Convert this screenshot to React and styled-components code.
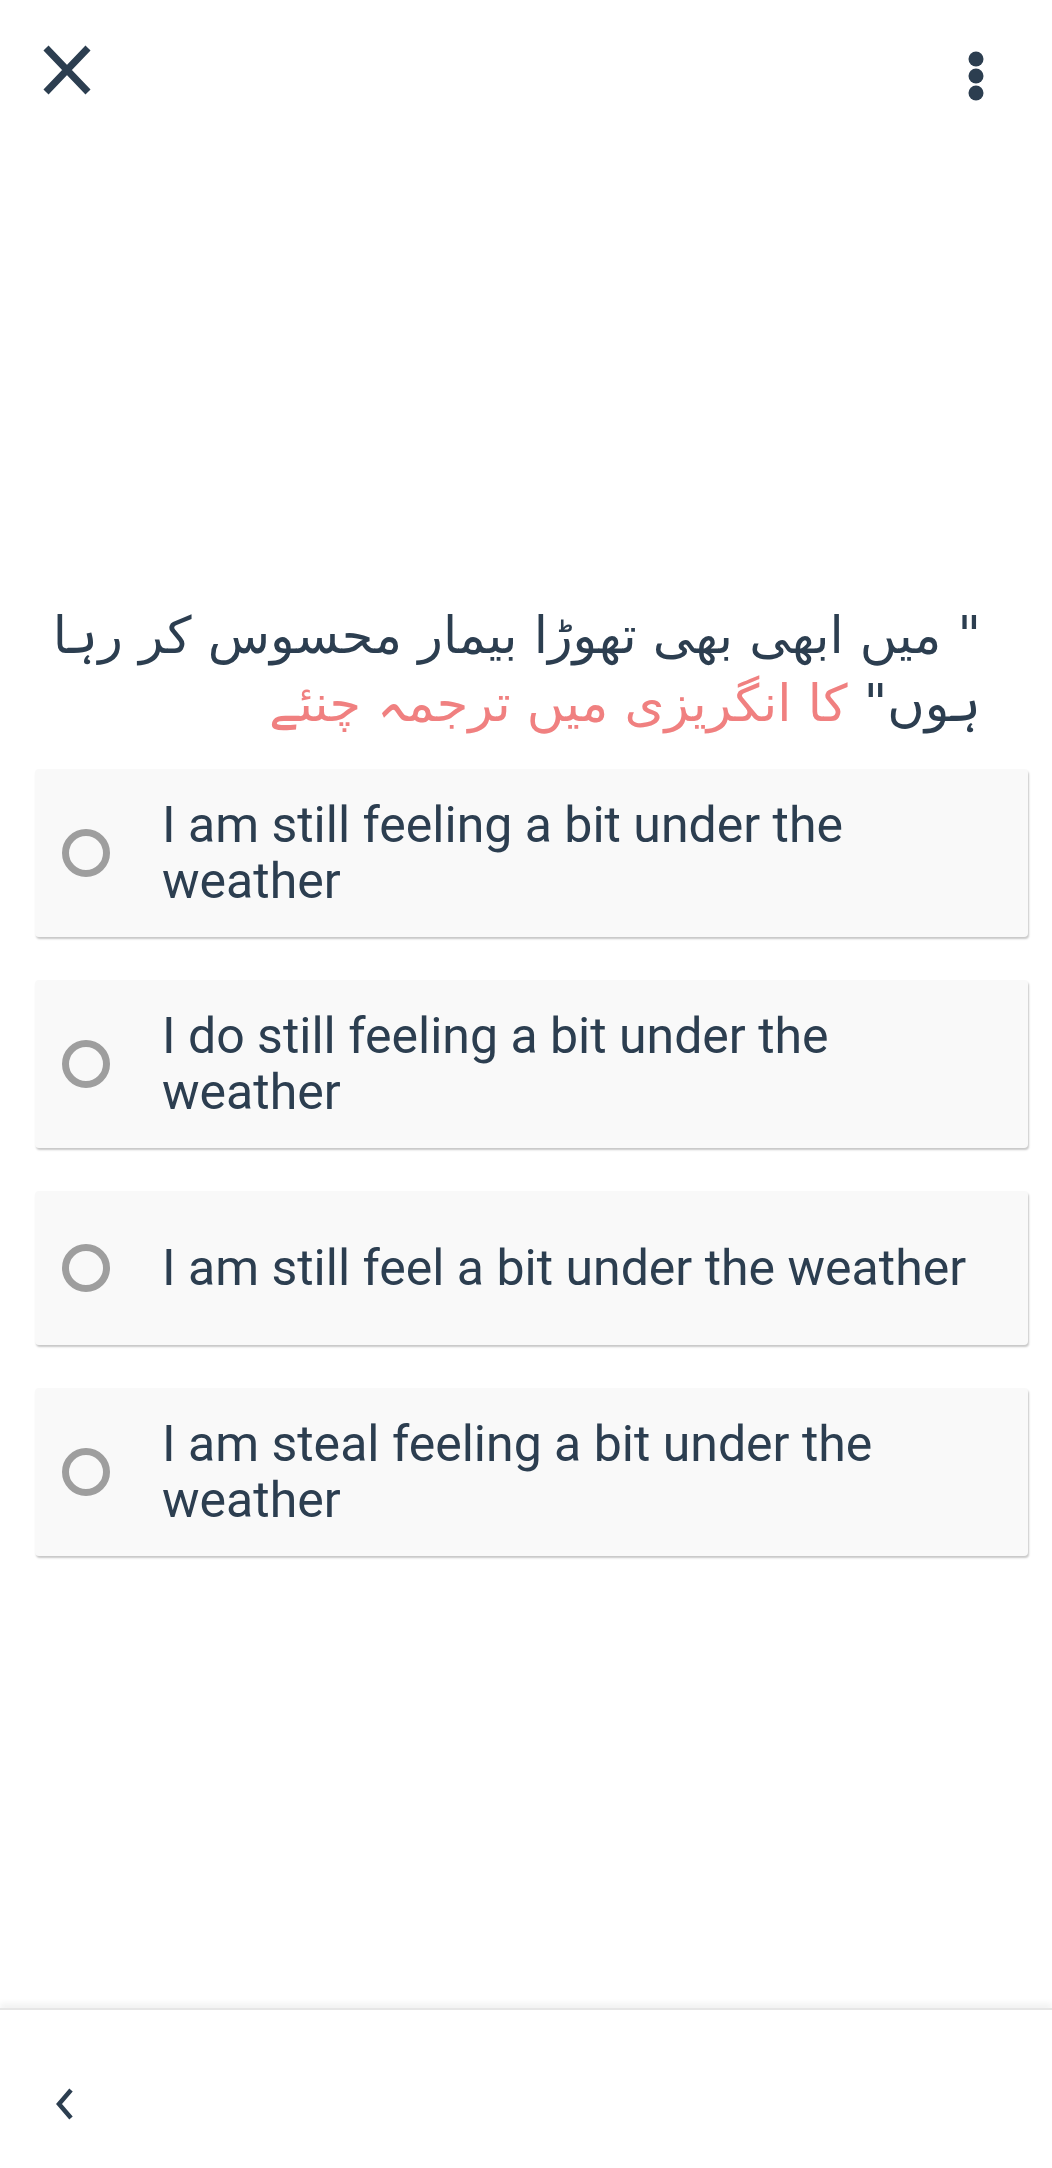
import styled, { createGlobalStyle } from "styled-components";

const Global = createGlobalStyle`
  html, body {
    margin: 0;
    padding: 0;
    background: #ffffff;
  }
  * { box-sizing: border-box; }
`;

const options = [
  "I am still feeling a bit under the weather",
  "I do still feeling a bit under the weather",
  "I am still feel a bit under the weather",
  "I am steal feeling a bit under the weather",
];

function CloseIcon() {
  return (
    <svg width="52" height="52" viewBox="0 0 52 52">
      <path d="M5 4 L47 48 M47 4 L5 48" stroke="#2c3e50" strokeWidth="7" strokeLinecap="butt" fill="none" />
    </svg>
  );
}

function MoreIcon() {
  return (
    <svg width="16" height="50" viewBox="0 0 16 50">
      <circle cx="8" cy="8" r="7.5" fill="#2c3e50" />
      <circle cx="8" cy="25" r="7.5" fill="#2c3e50" />
      <circle cx="8" cy="42" r="7.5" fill="#2c3e50" />
    </svg>
  );
}

function BackIcon() {
  return (
    <svg width="20" height="34" viewBox="0 0 20 34">
      <polyline points="16,3 4,17 16,31" stroke="#2c3e50" strokeWidth="4.5" fill="none" strokeLinejoin="miter" />
    </svg>
  );
}

export default function App() {
  return (
    <Page>
      <Global />
      <Header>
        <IconButton><CloseIcon /></IconButton>
        <IconButton $lift><MoreIcon /></IconButton>
      </Header>

      <Main>
        <Question dir="rtl" lang="ur">
          " میں ابھی بھی تھوڑا بیمار محسوس کر رہا ہوں"
          <Hint> کا انگریزی میں ترجمہ چنئے</Hint>
        </Question>

        <Options>
          {options.map((o, i) => (
            <Card key={i}>
              <Radio />
              <Label>{o}</Label>
            </Card>
          ))}
        </Options>
      </Main>

      <BottomBar>
        <IconButton><BackIcon /></IconButton>
      </BottomBar>
    </Page>
  );
}

const Page = styled.div`
  display: flex;
  flex-direction: column;
  min-height: 100vh;
  background: #ffffff;
  font-family: Roboto, "Liberation Sans", sans-serif;
  color: #2c3e50;
`;

const Header = styled.header`
  display: flex;
  justify-content: space-between;
  align-items: center;
  padding: 0 68px 0 41px;
  height: 140px;
`;

const IconButton = styled.button`
  display: flex;
  align-items: center;
  justify-content: center;
  padding: 0;
  border: none;
  background: transparent;
  margin-top: ${(p) => (p.$lift ? "12px" : "0")};
`;

const Main = styled.main`
  flex: 1;
  display: flex;
  flex-direction: column;
  padding: 462px 24px 0 35px;
`;

const Question = styled.p`
  margin: 0 47px 31px 4px;
  font-family: "DejaVu Sans", sans-serif;
  font-size: 51px;
  line-height: 68px;
  color: #2c3e50;
  text-align: right;
`;

const Hint = styled.span`
  color: #f08080;
`;

const Options = styled.div`
  display: flex;
  flex-direction: column;
  gap: 43px;
`;

const Card = styled.div`
  display: flex;
  align-items: center;
  min-height: 154px;
  padding: 28px 20px 28px 27px;
  background: #f9f9f9;
  border-radius: 4px;
  box-shadow: 1px 2px 2px rgba(0, 0, 0, 0.22);
`;

const Radio = styled.span`
  flex: none;
  width: 48px;
  height: 48px;
  border: 7px solid #9e9e9e;
  border-radius: 50%;
  margin-right: 52px;
`;

const Label = styled.span`
  font-size: 50px;
  line-height: 56px;
  color: #2c3e50;
`;

const BottomBar = styled.footer`
  display: flex;
  align-items: center;
  height: 160px;
  padding: 30px 0 0 55px;
  border-top: 2px solid #e6e6e6;
  box-shadow: 0 -5px 6px rgba(0, 0, 0, 0.05);
  background: #ffffff;
`;
